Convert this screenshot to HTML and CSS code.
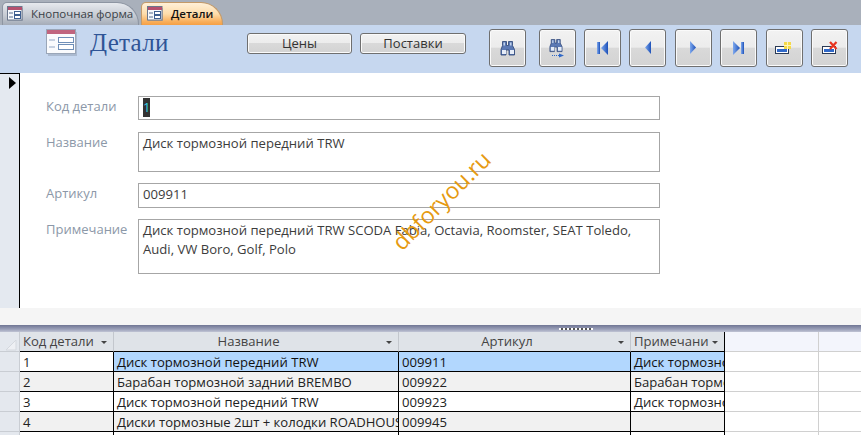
FILE: index.html
```html
<!DOCTYPE html>
<html lang="ru">
<head>
<meta charset="utf-8">
<title>Детали</title>
<link rel="stylesheet" href="styles.css">
</head>
<body>
<svg class="defs" width="0" height="0">
  <defs>
    <linearGradient id="blue" x1="0" y1="0" x2="1" y2="0"><stop offset="0" stop-color="#7fa9ee"/><stop offset="1" stop-color="#1c50b8"/></linearGradient>
    <g id="formicon">
      <rect x="1" y="2" width="15" height="13" fill="#8b95a5" opacity=".5"/>
      <rect x=".5" y=".5" width="14.500" height="13.500" fill="#f7f9fc" stroke="#6a778c"/>
      <rect x="1" y="1" width="14" height="3" fill="#b5506f"/>
      <path d="M2 7h4M2 11h4" stroke="#55698a"/>
      <rect x="7.500" y="5.500" width="6" height="3" fill="#fff" stroke="#3f5f90"/>
      <rect x="7.500" y="9.500" width="6" height="3" fill="#fff" stroke="#3f5f90"/>
    </g>
    <g id="binoc">
      <path d="M2.500 .5h4v4h2v-4h4v4l2 4v5.500h-5.500V9h-3v5H1V8.500l1.500-4z" fill="#5b79b4" stroke="#2a4274" stroke-width=".8"/>
      <path d="M2 9h4v4H2zM10 9h4v4h-4z" fill="#e6edf8"/>
      <path d="M3.500 1.500h1.500v3H3.500zM10 1.500h1.500v3H10z" fill="#c2d3ec"/>
    </g>
    <g id="recbox">
      <rect x=".5" y="5.500" width="13" height="7" fill="#fff" stroke="#2b3a55"/>
      <rect x="2" y="8" width="10" height="3" fill="#2f68c8"/>
    </g>
  </defs>
</svg>
<div class="tabbar">
  <div class="tab">
    <svg class="tab-icon" width="16" height="15" viewBox="0 0 16 15"><use href="#formicon"/></svg>
    <span>Кнопочная форма</span>
  </div>
  <div class="tab tab-active">
    <svg class="tab-icon" width="16" height="15" viewBox="0 0 16 15"><use href="#formicon"/></svg>
    <span>Детали</span>
  </div>
</div>
<header class="formhead">
  <svg class="head-icon" width="31" height="27" viewBox="0 0 31 27">
    <rect x="2" y="3" width="29" height="24" fill="#8a97aa" opacity=".45"/>
    <rect x=".5" y=".5" width="29" height="24" fill="#fafbfd" stroke="#9aa6b8"/>
    <rect x="1" y="1" width="28" height="4" fill="#c0657f"/>
    <path d="M3 11h6M3 18h6" stroke="#94a8c6"/>
    <rect x="12.500" y="8.500" width="15" height="5" fill="#fff" stroke="#6f8fb8"/>
    <rect x="12.500" y="15.500" width="15" height="5" fill="#fff" stroke="#6f8fb8"/>
  </svg>
  <h1 class="title">Детали</h1>
  <div class="textbtns">
    <button class="btn btn-text btn-prices">Цены</button>
    <button class="btn btn-text btn-supply">Поставки</button>
  </div>
  <div class="iconbtns">
    <button class="btn btn-icon btn-find" aria-label="Найти"><svg width="16" height="15" viewBox="0 0 16 15"><use href="#binoc"/></svg></button>
    <button class="btn btn-icon btn-findnext" aria-label="Найти далее"><svg width="16" height="20" viewBox="0 0 16 20"><use href="#binoc" transform="scale(.9)"/><path d="M3 16.500h8" stroke="#2f68c8" stroke-dasharray="1 1"/><path d="M10 14.500l5 2-5 2z" fill="#2f68c8"/></svg></button>
    <button class="btn btn-icon" aria-label="Первая"><svg width="13" height="14" viewBox="0 0 13 14"><rect x="1" y="1" width="3" height="12" fill="url(#blue)"/><path d="M12 0v14L5 7z" fill="url(#blue)"/></svg></button>
    <button class="btn btn-icon" aria-label="Назад"><svg width="8" height="14" viewBox="0 0 8 14"><path d="M7 0v13L1 6.500z" fill="url(#blue)"/></svg></button>
    <button class="btn btn-icon" aria-label="Вперёд"><svg width="8" height="14" viewBox="0 0 8 14"><path d="M1 0v13l6-6.500z" fill="url(#blue)"/></svg></button>
    <button class="btn btn-icon" aria-label="Последняя"><svg width="13" height="14" viewBox="0 0 13 14"><path d="M1 0v14l7-7z" fill="url(#blue)"/><rect x="9" y="1" width="3" height="12" fill="url(#blue)"/></svg></button>
    <button class="btn btn-icon" aria-label="Новая"><svg width="18" height="14" viewBox="0 0 18 14"><use href="#recbox"/><rect x="9" y="1" width="7" height="7" fill="#f5d94a"/><path d="M12.500 1v7M9 4.500h7" stroke="#fff6b8"/></svg></button>
    <button class="btn btn-icon" aria-label="Удалить"><svg width="18" height="14" viewBox="0 0 18 14"><use href="#recbox" x="1"/><path d="M9 1l6.500 7M15.500 1L9 8" stroke="#e8321e" stroke-width="2.200"/></svg></button>
  </div>
</header>
<main class="formbody">
  <div class="selector"><span class="arrow"></span></div>
  <form class="fields">
    <div class="row row-id"><label class="lbl">Код детали</label><div class="val"><span class="caret">1</span></div></div>
    <div class="row row-name"><label class="lbl">Название</label><div class="val">Диск тормозной передний TRW</div></div>
    <div class="row row-art"><label class="lbl">Артикул</label><div class="val">009911</div></div>
    <div class="row row-note"><label class="lbl">Примечание</label><div class="val">Диск тормозной передний TRW SCODA Fabia, Octavia, Roomster, SEAT Toledo, Audi, VW Boro, Golf, Polo</div></div>
  </form>
  <div class="watermark">dbforyou.ru</div>
</main>
<div class="gap"></div>
<div class="splitter"><span class="grip"></span></div>
<section class="sheet">
  <div class="cell hd sel"><svg width="12" height="12" viewBox="0 0 12 12"><path d="M11 1v10H1z" fill="#eef0f4" stroke="#d4d8de"/></svg></div>
  <div class="cell hd">Код детали<i class="drop"></i></div>
  <div class="cell hd center">Название<i class="drop"></i></div>
  <div class="cell hd center">Артикул<i class="drop"></i></div>
  <div class="cell hd hd-last">Примечани<i class="drop"></i></div>
  <div class="cell blank-h"></div><div class="cell blank-h wide"></div>

  <div class="cell sel"></div><div class="cell d">1</div><div class="cell d hi">Диск тормозной передний TRW</div><div class="cell d hi">009911</div><div class="cell d hi last">Диск тормозной передний TRW</div><div class="cell blank"></div><div class="cell blank wide"></div>

  <div class="cell sel"></div><div class="cell d alt">2</div><div class="cell d alt">Барабан тормозной задний BREMBO</div><div class="cell d alt">009922</div><div class="cell d alt last">Барабан тормозной задний BREMBO</div><div class="cell blank"></div><div class="cell blank wide"></div>

  <div class="cell sel"></div><div class="cell d">3</div><div class="cell d">Диск тормозной передний TRW</div><div class="cell d">009923</div><div class="cell d last">Диск тормозной передний TRW</div><div class="cell blank"></div><div class="cell blank wide"></div>

  <div class="cell sel"></div><div class="cell d alt">4</div><div class="cell d alt">Диски тормозные 2шт + колодки ROADHOUSE</div><div class="cell d alt">009945</div><div class="cell d alt last"></div><div class="cell blank"></div><div class="cell blank wide"></div>

  <div class="cell sel"></div><div class="cell d"></div><div class="cell d"></div><div class="cell d"></div><div class="cell d last"></div><div class="cell blank"></div><div class="cell blank wide"></div>
</section>
</body>
</html>
```
FILE: styles.css
```css
* { box-sizing: border-box; }
html, body { margin: 0; height: 435px; overflow: hidden; }
body { background: #fff; font-family: "Open Sans", "Noto Sans", sans-serif; font-size: 13px; color: #333; width: 861px; }
.defs { position: absolute; }

.tabbar { height: 25px; background: #a9b0bb; display: flex; align-items: flex-end; padding-left: 2px; gap: 2px; }
.tab { height: 23px; width: 137px; display: flex; align-items: center; padding: 0 0 1px 4px; gap: 8px; color: #3a3f47; font-size: 11.500px; border: 1px solid #8d95a2; border-bottom: 0; border-radius: 5px 22px 0 0; background: linear-gradient(#e6e9ee, #c4c9d1 60%, #a5acb8); }
.tab-active { width: 82px; margin-left: 0; padding-left: 5px; color: #111; font-weight: 600; border-color: #c49a68; background: linear-gradient(#fff0d8, #fddcaa 50%, #f9ae5a 85%, #f59f45); }

.formhead { height: 48px; background: #c6d7ef; position: relative; display: flex; align-items: flex-start; padding-left: 46px; }
.head-icon { margin-top: 4px; }
.title { margin: 3px 0 0 13px; width: 157px; font: 400 25px/30px "Liberation Serif", serif; color: #2f5496; letter-spacing: .3px; }
.textbtns { display: flex; gap: 8px; margin-top: 8px; }
.iconbtns { display: flex; gap: 8.400px; margin: 4px 0 0 23px; }
.btn { padding: 0; font: inherit; border: 1px solid #6f6f6f; border-radius: 3px; background: linear-gradient(#f2f2f2 0, #ececec 48%, #d9d9d9 50%, #d3d3d3 100%); box-shadow: inset 0 0 0 1px #fafafa; color: #333; display: flex; align-items: center; justify-content: center; }
.btn-text { height: 21px; font-size: 13px; padding-bottom: 1px; }
.btn-prices { width: 105px; }
.btn-supply { width: 106px; }
.btn-icon { width: 37px; height: 38px; }
.btn-find { margin-right: 4.300px; }
.btn-findnext svg { margin-top: 2px; }

.formbody { height: 235px; position: relative; display: flex; }
.selector { width: 20px; background: #e4e9f0; border-top: 1px solid #000; border-right: 1px solid #000; padding: 3px 0 0 9px; }
.arrow { display: block; width: 0; height: 0; border-left: 7px solid #000; border-top: 6px solid transparent; border-bottom: 6px solid transparent; }
.fields { flex: 1; padding: 23px 0 0 26px; }
.row { display: flex; width: 614px; }
.lbl { width: 92px; color: #8c98a8; font-size: 13px; line-height: 17px; padding-top: 2px; }
.val { flex: 1; border: 1px solid #a6a6a6; background: #fff; padding: 1px 4px 0; font-size: 13.100px; line-height: 19px; color: #3c3c3c; }
.row-id { height: 24px; margin-bottom: 12px; }
.row-name { height: 40px; margin-bottom: 11px; }
.row-art { height: 25px; margin-bottom: 11px; }
.row-note { height: 55px; }
.caret { display: inline-block; background: #333; color: #35d0e8; height: 19px; width: 7px; line-height: 19px; text-align: center; }
.watermark { position: absolute; left: 378px; top: 116px; width: 120px; text-align: center; color: #e69a10; font-size: 23px; line-height: 28px; transform: rotate(-45deg); }

.gap { height: 17px; background: #f5f5f5; }
.splitter { height: 7px; background: linear-gradient(#6f7594, #9a9fb8 60%, #c0c4d4); display: flex; align-items: center; padding-left: 559px; }
.grip { width: 34px; height: 2px; background: repeating-linear-gradient(90deg, #fff 0 2px, #555 2px 4px); }

.sheet { display: grid; grid-template-columns: 20px 94px 285px 232px 94px 94px 43px; grid-template-rows: repeat(6, 20px); }
.cell { font-size: 13.100px; line-height: 18px; padding: 0 3px; overflow: hidden; white-space: nowrap; position: relative; }
.hd { background: #dfe3e8; color: #444; border-right: 1px solid #c3c7cd; border-bottom: 1px solid #000; padding-right: 14px; }
.sel { background: #e4e8ee; border-right: 1px solid #c9cdd3; border-bottom: 1px solid #c9cdd3; }
.hd.sel { background: #e4e8ee; padding: 5px 0 0 5px; border-bottom-color: #c9cdd3; }
.center { text-align: center; padding-right: 18px; }
.hd-last { border-right: 1px solid #000; }
.drop { position: absolute; right: 6px; top: 9px; width: 0; height: 0; border-left: 3px solid transparent; border-right: 3px solid transparent; border-top: 3px solid #444; }
.d { border-right: 1px solid #000; border-bottom: 1px solid #000; color: #222; padding-top: 1px; }
.alt { background: #f1f1f1; }
.hi { background: #b2d7fe; color: #111; }
.blank, .blank-h { border-right: 1px solid #d0d0d0; border-bottom: 1px solid #d0d0d0; }
.blank-h { background: #f3f5fc; }
.wide { border-right: 0; }
```
